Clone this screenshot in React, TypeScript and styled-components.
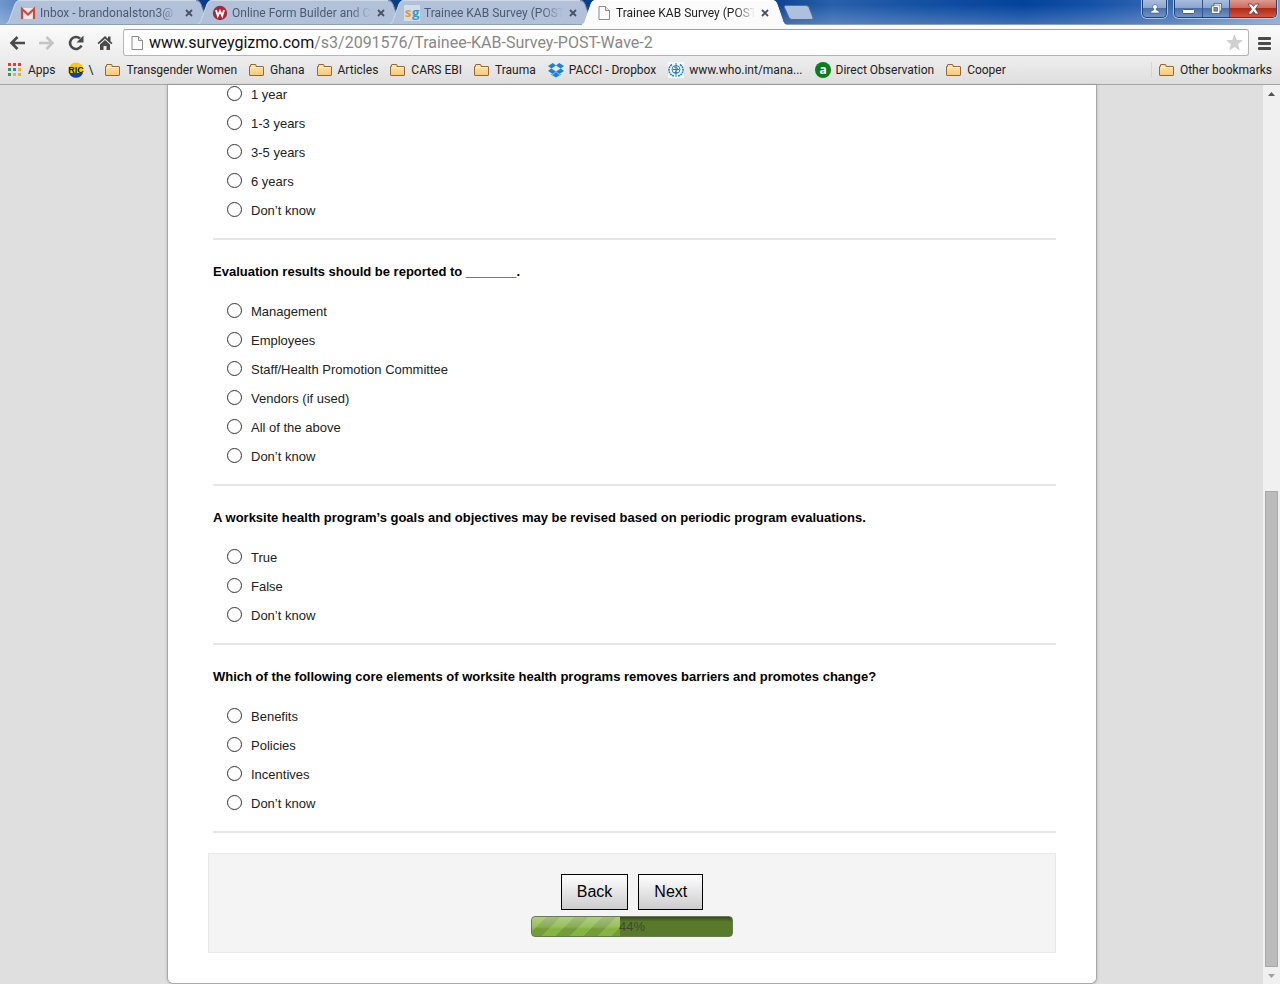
import React from "react";
import styled, { createGlobalStyle, css } from "styled-components";

const uiFont = `Roboto, "Noto Sans", sans-serif`;
const pageFont = `"Liberation Sans", Arial, sans-serif`;

const GlobalStyle = createGlobalStyle`
  *, *::before, *::after { box-sizing: border-box; }
  body { margin: 0; background: #dfdfdf; }
  h2, ul, fieldset, legend { margin: 0; padding: 0; border: 0; }
  button { font: inherit; color: inherit; cursor: pointer; }
  svg { display: block; flex: none; }
`;

const Window = styled.div`
  display: flex;
  flex-direction: column;
  min-height: 100vh;
  overflow: hidden;
`;

/* ---------- window frame and tabs ---------- */

const TabStrip = styled.header`
  display: flex;
  align-items: flex-end;
  height: 25px;
  padding-left: 6px;
  border-bottom: 1px solid #8f9fb8;
  font: 12px/16px ${uiFont};
  background:
    linear-gradient(180deg, rgba(255, 255, 255, 0) 20%, rgba(255, 255, 255, 0.22) 100%),
    linear-gradient(90deg, #6f97ce 0, #4674b9 3%, #083c86 15%, #0a3f8c 60%, #2860ab 65%, #1450a2 72%, #03439c 80%, #1450a6 85%, #3a6cb5 92%, #7d9fcc 100%);
`;

const TabItem = styled.div<{ $active?: boolean }>`
  display: flex;
  flex: none;
  height: 24px;
  width: 204px;
  margin-right: -12px;
  position: relative;
  z-index: ${(p) => (p.$active ? 2 : 1)};
  color: ${(p) => (p.$active ? "#222" : "#4d5a70")};
  ${(p) =>
    p.$active &&
    css`
      height: 25px;
      margin-bottom: -1px;
    `}
`;

const TabFace = styled.div<{ $active?: boolean }>`
  display: flex;
  align-items: center;
  flex: 1;
  min-width: 0;
  border-top: 1px solid ${(p) => (p.$active ? "#fff" : "#cdd8e8")};
  background: ${(p) => (p.$active ? "#fbfbfb" : "#b1c1da")};
`;

const TabTitle = styled.span`
  flex: 1;
  min-width: 0;
  margin-left: 4px;
  white-space: nowrap;
  mask-image: linear-gradient(90deg, #000 85%, transparent 100%);
`;

const TabClose = styled.button`
  display: flex;
  padding: 3px;
  margin: 0 0 0 3px;
  border: 0;
  background: none;
`;

const NewTab = styled.button`
  padding: 0;
  margin: 0 0 4px 9px;
  border: 0;
  background: none;
`;

const WindowControls = styled.div`
  display: flex;
  align-self: flex-start;
  margin-left: auto;
  padding-right: 3px;
`;

const ControlGroup = styled.div`
  display: flex;
  height: 18px;
  margin-left: 7px;
  border: 1px solid #24416f;
  border-top: 0;
  border-radius: 0 0 5px 5px;
  overflow: hidden;
  box-shadow: 0 0 0 1px rgba(210, 225, 245, 0.7);
`;

const ControlButton = styled.button<{ $width: number; $close?: boolean }>`
  display: flex;
  align-items: center;
  justify-content: center;
  width: ${(p) => p.$width}px;
  padding: 0;
  border: 0;
  background: ${(p) =>
    p.$close
      ? "linear-gradient(180deg, #dd9a8e 0, #cc6b5c 45%, #b02a17 50%, #cf5540 100%)"
      : "linear-gradient(180deg, #a9bedd 0, #8ba6cf 45%, #4a70aa 50%, #7093c6 100%)"};
  & + & { border-left: 1px solid #35558a; }
`;

/* ---------- toolbar ---------- */

const Toolbar = styled.nav`
  display: flex;
  align-items: center;
  height: 34px;
  padding: 1px 8px 0 9px;
  background: linear-gradient(180deg, #fbfbfb, #ececec);
`;

const ToolButton = styled.button`
  display: flex;
  align-items: center;
  justify-content: center;
  width: 29px;
  height: 26px;
  padding: 0;
  border: 0;
  background: none;
  &:first-child { width: 17px; margin-right: 6px; }
`;

const Omnibox = styled.div`
  display: flex;
  flex: 1;
  align-items: center;
  height: 27px;
  margin: 0 8px 0 4px;
  padding: 0 5px 0 7px;
  border: 1px solid #b5b5b5;
  border-top-color: #a0a0a0;
  border-radius: 3px;
  background: #fff;
`;

const Address = styled.div`
  display: grid;
  flex: 1;
  margin-left: 5px;
  font: 16px/24px ${uiFont};
  color: #888;
  white-space: pre;
  b { font-weight: 400; color: #111; }
`;

const Plain = styled.button`
  display: flex;
  padding: 0;
  border: 0;
  background: none;
`;

const BookmarkBar = styled.nav`
  display: flex;
  align-items: center;
  gap: 12px;
  height: 26px;
  padding: 0 8px 4px 7px;
  border-bottom: 1px solid #a5a5a5;
  background: linear-gradient(180deg, #ececec, #dedede);
  font: 12px/16px ${uiFont};
`;

const Bookmark = styled.a<{ $end?: boolean }>`
  display: flex;
  align-items: center;
  gap: 5px;
  color: #222;
  text-decoration: none;
  white-space: nowrap;
  ${(p) =>
    p.$end &&
    css`
      margin-left: auto;
      padding-left: 7px;
      border-left: 1px solid #cfd6dd;
    `}
`;

/* ---------- survey page ---------- */

const Viewport = styled.div`
  display: flex;
  flex: 1;
  background: #dfdfdf;
`;

const Main = styled.main`
  display: flex;
  flex: 1;
  justify-content: center;
  padding-left: 1px;
`;

const Sheet = styled.form`
  width: 100%;
  max-width: 930px;
  padding: 1px 40px 30px;
  border: 1px solid #a9a9a9;
  border-top: 0;
  border-radius: 0 0 6px 6px;
  background: #fff;
  box-shadow: 0 0 3px rgba(0, 0, 0, 0.2);
  font: 13px/15px ${pageFont};
  color: #222;
`;

const Question = styled.fieldset`
  min-width: 0;
  margin-left: 5px;
  padding-bottom: 19px;
  border-bottom: 2px solid #e6e6e6;
`;

const QuestionTitle = styled.legend`
  padding: 24px 0;
  font-weight: 700;
  color: #000;
`;

const Options = styled.div`
  display: grid;
  gap: 12px;
  padding-left: 14px;
`;

const Option = styled.label`
  display: flex;
  align-items: flex-start;
  gap: 9px;
  line-height: 17px;
`;

const Radio = styled.input`
  appearance: none;
  width: 15px;
  height: 15px;
  margin: 0;
  border: 1px solid #333;
  border-radius: 50%;
  background: #fff;
  &:checked { box-shadow: inset 0 0 0 3px #fff; background: #333; }
`;

const FooterPanel = styled.div`
  display: flex;
  flex-direction: column;
  align-items: center;
  gap: 6px;
  margin-top: 20px;
  padding: 20px 0 15px;
  border: 1px solid #e8e8e8;
  background: #f4f4f4;
`;

const ButtonRow = styled.div`
  display: flex;
  gap: 10px;
`;

const NavButton = styled.button`
  height: 36px;
  padding: 0 15px;
  border: 1px solid #000;
  background: linear-gradient(180deg, #fff, #ccc);
  font: 16px/20px ${pageFont};
  color: #000;
`;

const ProgressTrack = styled.div`
  display: grid;
  width: 202px;
  height: 21px;
  border: 1px solid #6a7a55;
  border-radius: 4px;
  overflow: hidden;
  background: linear-gradient(180deg, #34491a 0, #5a7a2b 25%, #5a7a2b 100%);
  > * { grid-area: 1 / 1; }
`;

const ProgressFill = styled.div`
  background:
    linear-gradient(180deg, rgba(255, 255, 255, 0.35), rgba(255, 255, 255, 0.15) 50%, transparent 60%),
    repeating-linear-gradient(135deg, #86b440 0 10px, #749c38 10px 20px);
`;

const ProgressLabel = styled.span`
  text-align: center;
  line-height: 20px;
  color: #3a4a2c;
`;

/* ---------- scroll bar ---------- */

const ScrollBar = styled.div`
  display: flex;
  flex-direction: column;
  flex: none;
  width: 17px;
  background: #f0f0f0;
`;

const ScrollArrow = styled.button`
  display: flex;
  align-items: center;
  justify-content: center;
  height: 17px;
  padding: 0;
  border: 0;
  background: none;
`;

const ScrollGap = styled.div`
  flex: 390;
`;

const ScrollThumb = styled.div`
  flex: 475;
  margin: 0 2px;
  border: 1px solid #a8a8a8;
  background: #bbb;
`;

/* ---------- icons ---------- */

const PageIcon = ({ narrow }: { narrow?: boolean }) => (
  <svg width={narrow ? 13 : 16} height="16" viewBox={narrow ? "2 0 13 16" : "0 0 16 16"}>
    <path d="M3 1.5h6.5l4 4v9H3z" fill="#fcfcfc" stroke="#8a8a8a" />
    <path d="M9.5 1.5v4h4" fill="#e8e8e8" stroke="#8a8a8a" />
  </svg>
);

const GmailIcon = () => (
  <svg width="16" height="16" viewBox="0 0 16 16">
    <path d="M1 3h14v11H1z" fill="#e9e9ec" />
    <path d="M2 14V4l6 5.5L14 4v10" fill="none" stroke="#d14836" strokeWidth="2.2" />
  </svg>
);

const WufooIcon = () => (
  <svg width="16" height="16" viewBox="0 0 16 16">
    <circle cx="8" cy="8" r="7.2" fill="#a72a3c" />
    <path d="M4 5l1.8 6L8 6l2.2 5L12 5" fill="none" stroke="#fff" strokeWidth="1.8" />
  </svg>
);

const GizmoIcon = () => (
  <svg width="16" height="16" viewBox="0 0 16 16">
    <rect width="16" height="16" fill="#d3dce9" />
    <text x="1" y="12" fontFamily="Open Sans" fontWeight="700" fontSize="13" fill="#e0983a">s</text>
    <text x="8" y="12" fontFamily="Open Sans" fontWeight="700" fontSize="13" fill="#359bc4">g</text>
  </svg>
);

const FolderIcon = () => (
  <svg width="16" height="16" viewBox="0 0 16 16">
    <defs>
      <linearGradient id="folder" x2="0" y2="1">
        <stop offset="0" stopColor="#ffe7b0" />
        <stop offset="1" stopColor="#fbc777" />
      </linearGradient>
    </defs>
    <path d="M.5 13V4.500h1V3q0-.5.5-.5h4.500q.5 0 .5.5v1.500H14q.5 0 .5.5v8q0 .5-.5.500H1q-.5 0-.5-.5z" fill="url(#folder)" stroke="#95683b" />
    <path d="M2 5.500h12" stroke="#fff5d8" />
  </svg>
);

const AppsIcon = () => {
  const colors = ["#e33b34", "#e33b34", "#e33b34", "#2f9e52", "#2f7de1", "#f0b020", "#2f9e52", "#f0b020", "#f0b020"];
  return (
    <svg width="16" height="16" viewBox="0 0 16 16">
      {colors.map((c, i) => (
        <rect key={i} x={1 + (i % 3) * 5} y={1 + Math.floor(i / 3) * 5} width="3" height="3" fill={c} />
      ))}
    </svg>
  );
};

const RicIcon = () => (
  <svg width="16" height="16" viewBox="0 0 16 16">
    <circle cx="8" cy="8" r="7.500" fill="#fbc80a" />
    <path d="M1 11a7.500 7.500 0 0 0 14 0z" fill="#123fae" />
    <text x="8" y="11" textAnchor="middle" fontFamily="Liberation Sans" fontWeight="700" fontSize="9" fill="#0a1430">RIC</text>
  </svg>
);

const DropboxIcon = () => (
  <svg width="16" height="16" viewBox="0 0 16 16" fill="#1482e0">
    <path d="M4.800 1L8 3.600 3.300 6.500 0 4zM11.200 1L16 4l-3.300 2.500L8 3.600zM0 9.100l3.300-2.600L8 9.400 4.800 12zM12.700 6.500L16 9.100 11.200 12 8 9.400zM8 10.100l3.200 2.600 1.500-.9v1L8 15.600l-4.700-2.800v-1l1.500.9z" />
  </svg>
);

const WhoIcon = () => (
  <svg width="16" height="16" viewBox="0 0 16 16" fill="none" stroke="#2580bd">
    <rect width="16" height="16" fill="#f6f9fb" stroke="none" />
    <path d="M4 2.500Q.5 5 1 9q.7 3.500 5 5M12 2.500Q15.500 5 15 9q-.7 3.500-5 5" strokeWidth="1.600" strokeDasharray="2 .6" />
    <circle cx="8" cy="7.500" r="4" />
    <path d="M8 1v14M4.500 7.500h7M6 5q4 0 3.500 2T6.500 10.500h3" />
  </svg>
);

const AIcon = () => (
  <svg width="16" height="16" viewBox="0 0 16 16">
    <circle cx="8" cy="8" r="8" fill="#0a7d1c" />
    <text x="8" y="12" textAnchor="middle" fontFamily="Open Sans" fontWeight="700" fontSize="12" fill="#fff">a</text>
  </svg>
);

const CloseGlyph = () => (
  <svg width="8" height="8" viewBox="0 0 8 8">
    <path d="M1 1l6 6M7 1L1 7" stroke="#4a5160" strokeWidth="1.800" />
  </svg>
);

/* ---------- data ---------- */

const tabs = [
  { title: "Inbox - brandonalston3@", icon: <GmailIcon /> },
  { title: "Online Form Builder and C", icon: <WufooIcon /> },
  { title: "Trainee KAB Survey (POST", icon: <GizmoIcon /> },
  { title: "Trainee KAB Survey (POST", icon: <PageIcon />, active: true },
];

const bookmarks = [
  { label: "Apps", icon: <AppsIcon /> },
  { label: "\\", icon: <RicIcon /> },
  { label: "Transgender Women", icon: <FolderIcon /> },
  { label: "Ghana", icon: <FolderIcon /> },
  { label: "Articles", icon: <FolderIcon /> },
  { label: "CARS EBI", icon: <FolderIcon /> },
  { label: "Trauma", icon: <FolderIcon /> },
  { label: "PACCI - Dropbox", icon: <DropboxIcon /> },
  { label: "www.who.int/mana...", icon: <WhoIcon /> },
  { label: "Direct Observation", icon: <AIcon /> },
  { label: "Cooper", icon: <FolderIcon /> },
];

const questions = [
  { title: "", options: ["1 year", "1-3 years", "3-5 years", "6 years", "Don’t know"] },
  {
    title: "Evaluation results should be reported to _______.",
    options: ["Management", "Employees", "Staff/Health Promotion Committee", "Vendors (if used)", "All of the above", "Don’t know"],
  },
  {
    title: "A worksite health program’s goals and objectives may be revised based on periodic program evaluations.",
    options: ["True", "False", "Don’t know"],
  },
  {
    title: "Which of the following core elements of worksite health programs removes barriers and promotes change?",
    options: ["Benefits", "Policies", "Incentives", "Don’t know"],
  },
];

const progress = 44;

function Tab({ title, icon, active }: { title: string; icon: React.ReactNode; active?: boolean }) {
  const fill = active ? "#fbfbfb" : "#b1c1da";
  const edge = active ? "#fff" : "#cdd8e8";
  const h = active ? 25 : 24;
  return (
    <TabItem $active={active}>
      <svg width="14" height={h} viewBox="0 0 14 24" preserveAspectRatio="none">
        <path d="M0 24Q2 23.500 3 21L9 4Q10.500 0 14 0V24z" fill={fill} />
        <path d="M0 24Q2 23.500 3 21L9 4Q10.500 .5 14 .5" fill="none" stroke={edge} />
      </svg>
      <TabFace $active={active}>
        {icon}
        <TabTitle>{title}</TabTitle>
        <TabClose type="button" aria-label="Close tab"><CloseGlyph /></TabClose>
      </TabFace>
      <svg width="14" height={h} viewBox="0 0 14 24" preserveAspectRatio="none">
        <path d="M14 24Q12 23.500 11 21L5 4Q3.500 0 0 0V24z" fill={fill} />
        <path d="M14 24Q12 23.500 11 21L5 4Q3.500 .5 0 .5" fill="none" stroke={active ? edge : "#70829f"} />
      </svg>
    </TabItem>
  );
}

export default function App() {
  return (
    <Window>
      <GlobalStyle />
      <TabStrip>
        {tabs.map((t, i) => (
          <Tab key={i} {...t} />
        ))}
        <NewTab type="button" aria-label="New tab">
          <svg width="32" height="15" viewBox="0 0 32 15">
            <path d="M2.500.5H23q2 0 3 2l4 10q.5 2-1.500 2H9q-2 0-3-2L1.500 2.500Q1 .5 2.500.5z" fill="#adc0dd" stroke="#4b6fa5" />
          </svg>
        </NewTab>
        <WindowControls>
          <ControlGroup>
            <ControlButton $width={23} type="button" aria-label="Profile">
              <svg width="12" height="12" viewBox="0 0 12 12">
                <path d="M6 1.500a2.300 2.300 0 0 1 1.200 4.300V7Q10.500 7.500 10.500 10h-9Q1.500 7.500 4.800 7V5.800A2.300 2.300 0 0 1 6 1.500z" fill="#fff" stroke="#3f5578" strokeWidth=".6" />
              </svg>
            </ControlButton>
          </ControlGroup>
          <ControlGroup>
            <ControlButton $width={27} type="button" aria-label="Minimize">
              <svg width="13" height="12" viewBox="0 0 13 12">
                <rect x=".5" y="6.500" width="12" height="4" rx="1" fill="#fff" stroke="#4b5a78" />
              </svg>
            </ControlButton>
            <ControlButton $width={27} type="button" aria-label="Restore">
              <svg width="11" height="11" viewBox="0 0 13 13">
                <path d="M3.500.5h9v9h-2v3h-10v-9h3z" fill="#fff" stroke="#4b5a78" />
                <rect x="3.500" y="5.500" width="4" height="4" fill="#7c97c0" stroke="#4b5a78" />
                <path d="M3.500 2.500h7v7" fill="none" stroke="#4b5a78" strokeWidth=".7" />
              </svg>
            </ControlButton>
            <ControlButton $width={47} $close type="button" aria-label="Close">
              <svg width="13" height="12" viewBox="0 0 13 12">
                <path d="M1 1h3.500l2 2.500 2-2.500H12L8.500 6l3.500 5H8.500l-2-2.500-2 2.500H1l3.500-5z" fill="#fff" stroke="#5b3b48" strokeWidth=".8" />
              </svg>
            </ControlButton>
          </ControlGroup>
        </WindowControls>
      </TabStrip>

      <Toolbar>
        <ToolButton type="button" aria-label="Back">
          <svg width="17" height="16" viewBox="0 0 17 16">
            <path d="M16 8H3M8.500 2L2.500 8l6 6" fill="none" stroke="#4a4a4a" strokeWidth="2.600" />
          </svg>
        </ToolButton>
        <ToolButton type="button" aria-label="Forward">
          <svg width="17" height="16" viewBox="0 0 17 16">
            <path d="M1 8h13M8.500 2l6 6-6 6" fill="none" stroke="#c4c4c4" strokeWidth="2.600" />
          </svg>
        </ToolButton>
        <ToolButton type="button" aria-label="Reload">
          <svg width="16" height="16" viewBox="0 0 16 16">
            <path d="M13.500 10.500A6 6 0 1 1 12 3.500" fill="none" stroke="#4a4a4a" strokeWidth="2.600" />
            <path d="M15.500 .5v7h-7z" fill="#4a4a4a" />
          </svg>
        </ToolButton>
        <ToolButton type="button" aria-label="Home">
          <svg width="16" height="16" viewBox="0 0 16 16" fill="#4a4a4a">
            <path d="M8 1l3 2.800V1.500h2.500v4.700L15.500 8l-1.200 1.300L8 3.700 1.700 9.300.5 8z" />
            <path d="M8 5l5 4.500V15H9.500v-4h-3v4H3V9.500z" />
          </svg>
        </ToolButton>
        <Omnibox>
          <PageIcon narrow />
          <Address>
            <span><b>www.surveygizmo.com</b>/s3/2091576/Trainee-KAB-Survey-POST-Wave-2</span>
          </Address>
          <Plain type="button" aria-label="Bookmark this page">
            <svg width="17" height="17" viewBox="0 0 17 17">
              <path d="M8.500 0l2.300 5.900 6.200.3-4.900 3.900L13.800 16.500 8.500 13l-5.300 3.500 1.700-6.400L0 6.200l6.200-.3z" fill="#cfcfcf" />
            </svg>
          </Plain>
        </Omnibox>
        <Plain type="button" aria-label="Menu">
          <svg width="15" height="14" viewBox="0 0 15 14" fill="#4a4a4a">
            <rect x="1" y="1" width="13" height="3" rx="1" />
            <rect x="1" y="6" width="13" height="3" rx="1" />
            <rect x="1" y="11" width="13" height="3" rx="1" />
          </svg>
        </Plain>
      </Toolbar>

      <BookmarkBar>
        {bookmarks.map((b) => (
          <Bookmark key={b.label} href="#">
            {b.icon}
            {b.label}
          </Bookmark>
        ))}
        <Bookmark href="#" $end>
          <FolderIcon />
          Other bookmarks
        </Bookmark>
      </BookmarkBar>

      <Viewport>
        <Main>
          <Sheet onSubmit={(e) => e.preventDefault()}>
            {questions.map((q, i) => (
              <Question key={i}>
                {q.title && <QuestionTitle>{q.title}</QuestionTitle>}
                <Options>
                  {q.options.map((o) => (
                    <Option key={o}>
                      <Radio type="radio" name={`question-${i}`} value={o} />
                      {o}
                    </Option>
                  ))}
                </Options>
              </Question>
            ))}
            <FooterPanel>
              <ButtonRow>
                <NavButton type="button">Back</NavButton>
                <NavButton type="submit">Next</NavButton>
              </ButtonRow>
              <ProgressTrack role="progressbar" aria-valuenow={progress} aria-valuemin={0} aria-valuemax={100}>
                <ProgressFill style={{ width: `${progress}%` }} />
                <ProgressLabel>{progress}%</ProgressLabel>
              </ProgressTrack>
            </FooterPanel>
          </Sheet>
        </Main>
        <ScrollBar>
          <ScrollArrow type="button" aria-label="Scroll up">
            <svg width="7" height="4" viewBox="0 0 7 4"><path d="M0 4L3.500 0 7 4z" fill="#505050" /></svg>
          </ScrollArrow>
          <ScrollGap />
          <ScrollThumb />
          <ScrollArrow type="button" aria-label="Scroll down">
            <svg width="7" height="4" viewBox="0 0 7 4"><path d="M0 0h7L3.500 4z" fill="#a0a0a0" /></svg>
          </ScrollArrow>
        </ScrollBar>
      </Viewport>
    </Window>
  );
}
